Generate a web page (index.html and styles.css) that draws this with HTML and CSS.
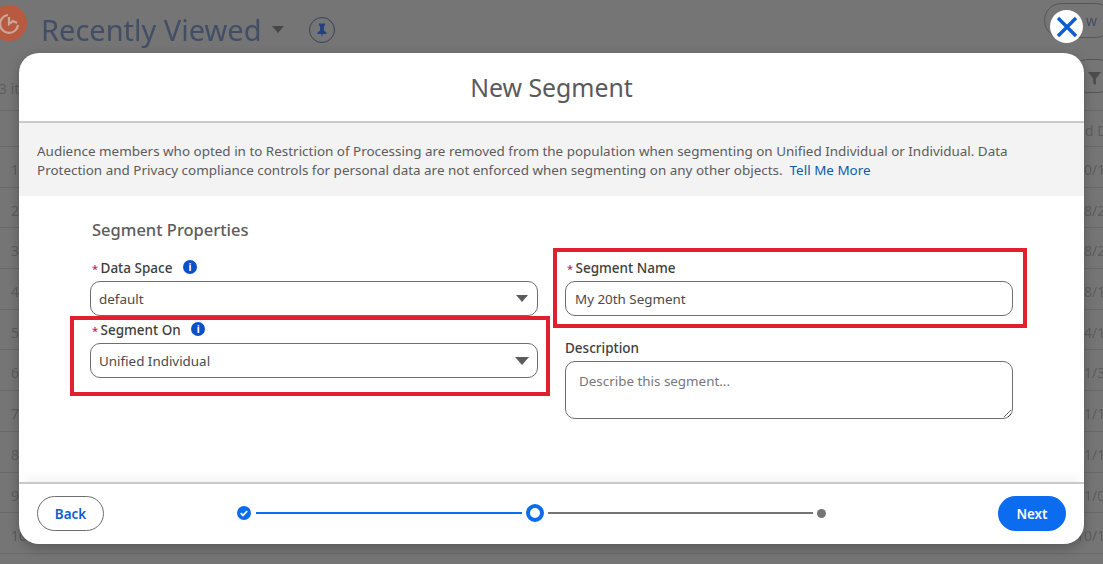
FILE: index.html
```html
<!DOCTYPE html>
<html lang="en">
<head>
  <meta charset="UTF-8" />
  <title>New Segment</title>
  <link rel="stylesheet" href="styles.css">
</head>
<body>
  <div class="page">
    <header class="list-head">
      <span class="app-icon">
        <svg viewBox="0 0 36 36" width="36" height="36"><path d="M17 10a9 9 0 1 0 10 10M18 12v7l4-3 4 2" fill="none" stroke="#f0c4b4" stroke-width="2.2"/></svg>
      </span>
      <h2 class="list-title">Recently Viewed</h2>
      <span class="caret"></span>
      <span class="pin">
        <svg viewBox="0 0 12 14" width="12" height="15"><path d="M3 0h6v1.5L8 3v4l2.5 2v1.5H6.7L6 14l-.7-3.5H1.5V9L4 7V3L3 1.5z" fill="#2c4c94"/></svg>
      </span>
      <span class="new-btn">w</span>
    </header>
    <div class="list-meta">
      <span>3 items</span>
      <span class="filter"><svg viewBox="0 0 14 14" width="13" height="13"><path d="M0 0h14L8.5 7v7l-3-2V7z" fill="#5a5a5a"/></svg></span>
    </div>
    <div class="row head-row"><span></span><span>d D</span></div>
    <div class="row"><span>1</span><span>10/1</span></div>
    <div class="row"><span>2</span><span>08/2</span></div>
    <div class="row"><span>3</span><span>08/2</span></div>
    <div class="row"><span>4</span><span>08/1</span></div>
    <div class="row"><span>5</span><span>04/1</span></div>
    <div class="row"><span>6</span><span>01/3</span></div>
    <div class="row"><span>7</span><span>11/1</span></div>
    <div class="row"><span>8</span><span>11/1</span></div>
    <div class="row"><span>9</span><span>11/0</span></div>
    <div class="row"><span>10</span><span>10/1</span></div>
  </div>

  <div class="scrim"></div>

  <button class="close-btn" aria-label="Close">
    <svg viewBox="0 0 24 24" width="24" height="24"><path d="M3 3l18 18M21 3L3 21" stroke="#0b5cd5" stroke-width="3.4"/></svg>
  </button>

  <section class="modal">
    <h1 class="modal-title">New Segment</h1>
    <p class="notice">Audience members who opted in to Restriction of Processing are removed from the population when segmenting on Unified Individual or Individual. Data Protection and Privacy compliance controls for personal data are not enforced when segmenting on any other objects.&nbsp; <a href="#">Tell Me More</a></p>

    <div class="modal-body">
      <div class="col-left">
        <h3 class="section-title">Segment Properties</h3>
        <div class="field">
          <label class="field-label"><span class="req">*</span>Data Space <span class="info">i</span></label>
          <div class="select">default<span class="select-arrow"></span></div>
        </div>
        <div class="field marked marked-left">
          <label class="field-label"><span class="req">*</span>Segment On <span class="info">i</span></label>
          <div class="select">Unified Individual<span class="select-arrow arrow-big"></span></div>
        </div>
      </div>
      <div class="col-right">
        <div class="field marked marked-right">
          <label class="field-label"><span class="req">*</span>Segment Name</label>
          <div class="select">My 20th Segment</div>
        </div>
        <div class="field desc-field">
          <label class="field-label">Description</label>
          <textarea class="desc" placeholder="Describe this segment..."></textarea>
        </div>
      </div>
    </div>

    <footer class="modal-foot">
      <button class="btn btn-back">Back</button>
      <div class="stepper">
        <span class="step step-done">
          <svg viewBox="0 0 14 14" width="14" height="14"><circle cx="7" cy="7" r="7" fill="#0b6cf0"/><path d="M3.8 7.2l2.2 2.2 4.2-4.4" fill="none" stroke="#fff" stroke-width="1.8"/></svg>
        </span>
        <span class="step-line line-done"></span>
        <span class="step step-current"></span>
        <span class="step-line"></span>
        <span class="step step-todo"></span>
      </div>
      <button class="btn btn-next">Next</button>
    </footer>
  </section>
</body>
</html>
```

FILE: styles.css
```css
* {
  box-sizing: border-box;
}

html, body {
  margin: 0;
  height: 564px;
  overflow: hidden;
}

body {
  font-family: "Noto Sans", "Open Sans", sans-serif;
  font-size: 13.4px;
  color: #444;
  background: #8a8a8a;
}

/* page behind the modal */
.page {
  height: 564px;
  overflow: hidden;
  color: #6e6e6e;
  background: #8a8a8a;
  font-size: 14px;
  filter: blur(0.6px);
}

.list-head {
  height: 55px;
  padding: 10px 20px 0 0;
  display: flex;
  align-items: flex-start;
}

.app-icon {
  width: 36px;
  height: 36px;
  margin: -5px 14px 0 -9px;
  border-radius: 50%;
  background: #d96a4c;
  flex: none;
}

.list-title {
  margin: 0;
  font-size: 29px;
  line-height: 40px;
  font-weight: 400;
  color: #4d5c78;
  white-space: nowrap;
}

.caret {
  width: 0;
  height: 0;
  margin: 16px 0 0 10px;
  border-left: 6px solid transparent;
  border-right: 6px solid transparent;
  border-top: 7px solid #555;
}

.pin {
  width: 26px;
  height: 26px;
  margin: 7px 0 0 25px;
  border: 1px solid #3f4f6e;
  border-radius: 50%;
  display: flex;
  align-items: center;
  justify-content: center;
}

.new-btn {
  margin: -7px -30px 0 auto;
  width: 69px;
  height: 35px;
  border: 1px solid #666;
  border-radius: 18px;
  padding: 7px 0 0 41px;
  color: #4d5c78;
}

.list-meta {
  height: 55px;
  display: flex;
  justify-content: space-between;
  padding: 24px 0 0;
  margin-left: -1px;
}

.filter {
  width: 40px;
  height: 34px;
  margin: -20px -10px 0 0;
  border: 1px solid #666;
  border-radius: 14px;
  padding: 10px 0 0 14px;
}

.row {
  height: 40.7px;
  padding: 13px 0 0 11px;
  line-height: 19px;
  border-bottom: 1px solid #7c7c7c;
  display: grid;
  grid-template-columns: 1065px 60px;
}

.head-row {
  height: 37px;
  padding-top: 10px;
  border-top: 1px solid #7c7c7c;
  grid-template-columns: 1074px 60px;
}

.scrim {
  position: absolute;
  inset: 0;
  background: rgba(0, 0, 0, 0.15);
}

.close-btn {
  position: absolute;
  top: 10px;
  left: 1050px;
  width: 33px;
  height: 33px;
  padding: 0;
  border: 0;
  border-radius: 50%;
  background: #fff;
  display: flex;
  align-items: center;
  justify-content: center;
  z-index: 2;
}

/* modal */
.modal {
  position: absolute;
  top: 53px;
  left: 19px;
  width: 1065px;
  height: 491px;
  background: #fff;
  border-radius: 20px;
  box-shadow: 0 4px 12px rgba(0, 0, 0, 0.25);
  display: flex;
  flex-direction: column;
}

.modal-title {
  margin: 0;
  height: 70px;
  border-bottom: 2px solid #c9c9c9;
  text-align: center;
  font-size: 24.8px;
  font-weight: 400;
  line-height: 68px;
  color: #5a5a5a;
  flex: none;
}

.notice {
  margin: 0;
  height: 73px;
  padding: 19px 60px 0 18px;
  background: #f3f3f3;
  font-size: 13.45px;
  line-height: 19px;
  color: #5c5c5c;
  flex: none;
}

.notice a {
  color: #0b5cab;
  text-decoration: none;
}

.modal-body {
  flex: 1;
  display: flex;
  padding: 0 0 0 51px;
}

.col-left {
  width: 480px;
  padding-top: 22px;
}

.col-right {
  margin-left: 3px;
  padding-top: 52px;
  width: 474px;
}

.section-title {
  margin: 0 0 17px 22px;
  font-size: 16.5px;
  line-height: 24px;
  font-weight: 500;
  color: #5c5c5c;
}

.field-label {
  display: block;
  height: 18px;
  margin: 0 0 4px 22px;
  font-size: 13.5px;
  line-height: 18px;
  font-weight: 500;
  color: #3e3e3c;
}

.req {
  margin-right: 2.5px;
  font-size: 11px;
  color: #c0246e;
}

.info {
  display: inline-block;
  width: 14px;
  height: 14px;
  margin-left: 7px;
  border-radius: 50%;
  background: #0b50c8;
  color: #fff;
  font-size: 10px;
  font-weight: 700;
  line-height: 14px;
  text-align: center;
  vertical-align: 2px;
}

.select {
  position: relative;
  height: 35px;
  line-height: 34px;
  margin: 0 12px 0 20px;
  padding: 0 8px;
  border: 1px solid #706e6b;
  border-radius: 10px;
  color: #4a4a4a;
  background: #fff;
}

.select-arrow {
  position: absolute;
  top: 13px;
  right: 9px;
  width: 0;
  height: 0;
  border-left: 6px solid transparent;
  border-right: 6px solid transparent;
  border-top: 7px solid #5c5c5c;
}

.arrow-big {
  right: 8px;
  border-left-width: 7px;
  border-right-width: 7px;
  border-top-width: 8px;
}

.marked {
  height: 80px;
  border: 4px solid #e0202e;
}

.marked-left {
  padding-top: 1px;
}

.marked-left .field-label {
  margin-left: 18px;
}

.marked-left .select {
  margin: 2px 8px 0 16px;
}

.marked-right {
  padding-top: 7px;
}

.marked-right .field-label {
  margin-left: 10px;
}

.marked-right .select {
  margin: 0 10px 0 8px;
  padding-left: 9px;
}

.desc-field {
  margin: 11px 14px 0 12px;
}

.desc-field .field-label {
  margin-left: 0;
}

.desc {
  display: block;
  width: 100%;
  height: 58px;
  padding: 10px 13px;
  border: 1px solid #706e6b;
  border-radius: 10px;
  font: inherit;
  color: #444;
  outline: 0;
}

.desc::placeholder {
  color: #777;
}

.modal-foot {
  flex: none;
  height: 62px;
  border-top: 2px solid #c9c9c9;
  box-shadow: 0 -8px 10px -4px rgba(0, 0, 0, 0.05);
  display: flex;
  align-items: center;
  padding: 0 18px 2px;
}

.btn {
  height: 35px;
  padding: 2px 0 0;
  border-radius: 18px;
  font: inherit;
  font-weight: 600;
}

.btn-back {
  width: 67px;
  border: 1px solid #706e6b;
  background: #fff;
  color: #0b5cd0;
}

.btn-next {
  width: 68px;
  margin-left: auto;
  border: 0;
  background: #0b6cf0;
  color: #fff;
}

.stepper {
  flex: none;
  margin-left: 133px;
  display: flex;
  align-items: center;
}

.step {
  flex: none;
  display: block;
  border-radius: 50%;
}

.step-done {
  width: 14px;
  height: 14px;
}

.step-done svg {
  display: block;
}

.step-current {
  width: 18px;
  height: 18px;
  border: 4.5px solid #0b6cf0;
}

.step-todo {
  width: 9px;
  height: 9px;
  background: #747474;
}

.step-line {
  height: 2px;
  width: 265px;
  margin: 0 4px;
  background: #747474;
}

.line-done {
  width: 266px;
  margin-left: 5px;
  background: #0b6cf0;
}
```
